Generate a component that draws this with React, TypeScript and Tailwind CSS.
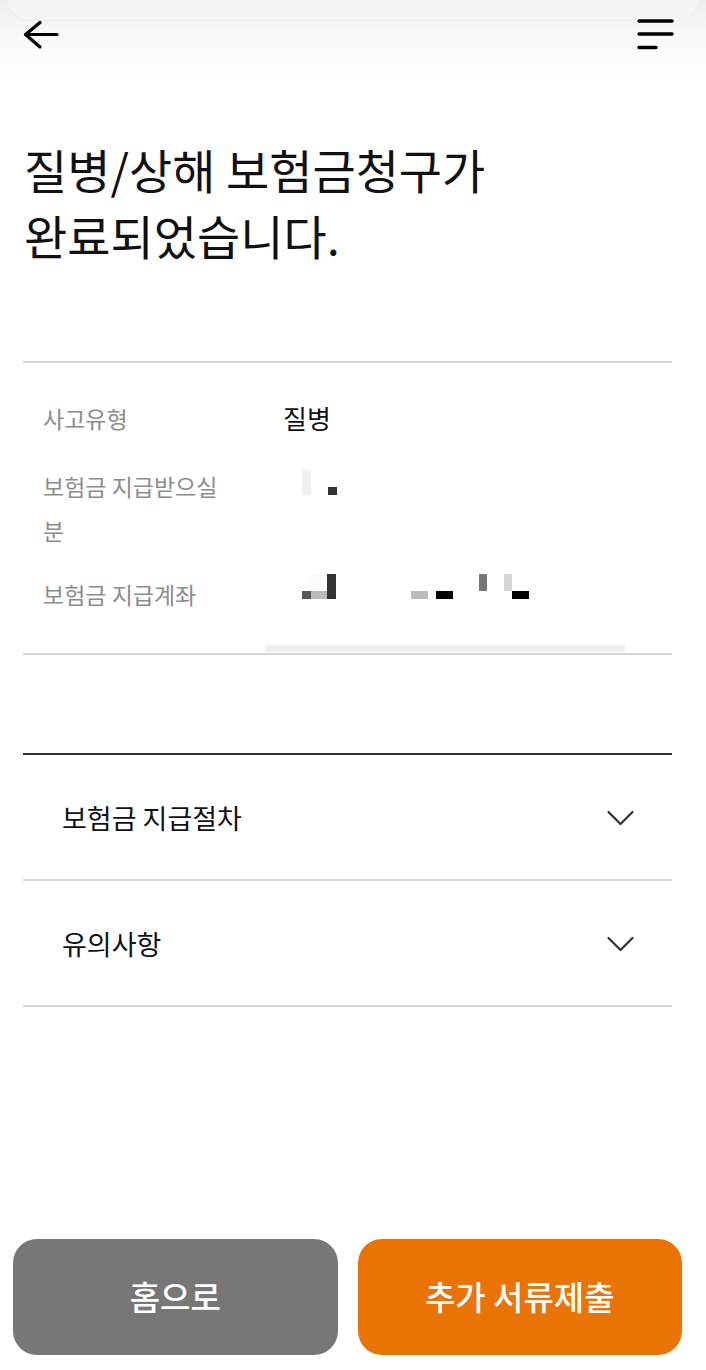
import React from "react";

const font = { fontFamily: '"Noto Sans CJK KR", "Noto Sans", sans-serif' };

type Block = { x: number; y: number; w: number; h: number; c: string };

// mosaic blocks that hide personal data, coords relative to the value column
const nameBlocks: Block[] = [
  { x: 19, y: 0, w: 9, h: 25, c: "#efefef" },
  { x: 45, y: 17, w: 9, h: 8, c: "#333333" },
];

const accountBlocks: Block[] = [
  { x: 19, y: 17, w: 9, h: 8, c: "#555555" },
  { x: 28, y: 0, w: 16, h: 17, c: "#fafafa" },
  { x: 28, y: 17, w: 16, h: 8, c: "#bbbbbb" },
  { x: 44, y: 0, w: 9, h: 25, c: "#333333" },
  { x: 128, y: 17, w: 17, h: 8, c: "#bbbbbb" },
  { x: 153, y: 17, w: 17, h: 8, c: "#000000" },
  { x: 196, y: 0, w: 8, h: 17, c: "#777777" },
  { x: 221, y: 0, w: 8, h: 17, c: "#d5d5d5" },
  { x: 229, y: 17, w: 17, h: 8, c: "#000000" },
];

const Mosaic = ({ blocks }: { blocks: Block[] }) => (
  <div className="relative h-[25px] w-[260px]">
    {blocks.map((b, i) => (
      <span
        key={i}
        className="absolute block"
        style={{ left: b.x, top: b.y, width: b.w, height: b.h, background: b.c }}
      />
    ))}
  </div>
);

const Chevron = () => (
  <svg width="27" height="16" viewBox="0 0 27 16" fill="none">
    <path d="M1.5 2 L13.5 14 L25.5 2" stroke="#333" strokeWidth="2.2" strokeLinecap="round" strokeLinejoin="round" />
  </svg>
);

const AccordionRow = ({ title }: { title: string }) => (
  <button className="flex h-[126px] w-full items-center justify-between border-b-2 border-[#d6d6d6] pl-[39px] pr-[38px] pt-[2px] text-left">
    <span className="text-[27px] text-[#111]">{title}</span>
    <Chevron />
  </button>
);

export default function App() {
  return (
    <div className="flex min-h-[1370px] w-[706px] flex-col bg-white" style={font}>
      {/* header */}
      <div className="h-[80px] bg-linear-to-b from-[#eeeeee] via-[#f9f9f9] to-white">
        <div className="mx-[8px] h-[20px] rounded-b-[32px] bg-[#f3f4f4] shadow-[0_1px_1px_rgba(0,0,0,0.03)]" />
        <div className="flex items-start justify-between pl-[22px] pr-[30px]">
          <svg width="40" height="30" viewBox="0 0 40 30" fill="none">
            <path d="M3.5 14.5 H35 M18 2.5 L3.5 14.5 L18 27" stroke="#000" strokeWidth="3.2" strokeLinecap="round" strokeLinejoin="round" />
          </svg>
          <svg width="40" height="32" viewBox="0 0 40 32" fill="none" className="-mt-[1px]">
            <path d="M3 2 H36 M3 15 H36 M3 28.5 H20" stroke="#000" strokeWidth="3.4" strokeLinecap="round" />
          </svg>
        </div>
      </div>

      {/* title */}
      <h1 className="mt-[56px] px-[24px] text-[47px] font-normal leading-[66px] text-[#111]">
        질병/상해 보험금청구가
        <br />
        완료되었습니다.
      </h1>

      {/* summary */}
      <div className="ml-[23px] mr-[34px] mt-[93px] border-y-2 border-[#d6d6d6] pb-[1px] pt-[33px]">
        <div className="flex flex-col">
          <div className="flex items-center">
            <div className="w-[260px] pl-[20px] text-[23px] leading-[44px] text-[#8c8c8c]">사고유형</div>
            <div className="text-[26px] leading-[44px] text-[#111]">질병</div>
          </div>
          <div className="mt-[24px] flex items-start">
            <div className="w-[260px] pl-[20px] pr-[52px] text-[23px] leading-[44px] text-[#8c8c8c]">보험금 지급받으실분</div>
            <div className="pt-[6px]">
              <Mosaic blocks={nameBlocks} />
            </div>
          </div>
          <div className="mt-[20px] flex items-center">
            <div className="w-[260px] pl-[20px] text-[23px] leading-[44px] text-[#8c8c8c]">보험금 지급계좌</div>
            <div className="-mt-[16px]">
              <Mosaic blocks={accountBlocks} />
            </div>
          </div>
          <div className="ml-[243px] mt-[29px] h-[7px] w-[359px] bg-[#eeeeee]" />
        </div>
      </div>

      {/* accordions */}
      <div className="ml-[23px] mr-[34px] mt-[98px] border-t-2 border-[#333]">
        <AccordionRow title="보험금 지급절차" />
        <AccordionRow title="유의사항" />
      </div>

      <div className="flex-1" />

      {/* buttons */}
      <div className="flex gap-[20px] pb-[15px] pl-[13px] pr-[24px]">
        <button className="h-[116px] flex-1 rounded-[24px] bg-[#777777] text-[33px] font-medium text-white">홈으로</button>
        <button className="h-[116px] flex-1 rounded-[24px] bg-[#e97405] text-[33px] font-medium text-white">추가 서류제출</button>
      </div>
    </div>
  );
}
